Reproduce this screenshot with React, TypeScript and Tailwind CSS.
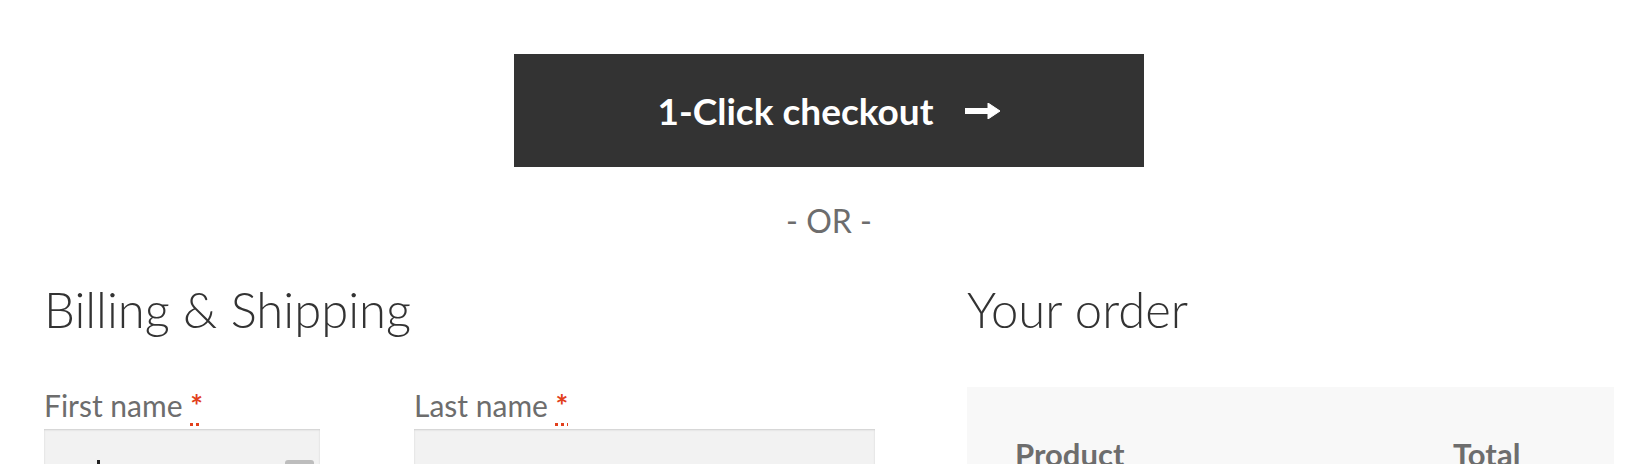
import React from "react";

function Arrow() {
  return (
    <svg width="35" height="16" viewBox="0 0 35 16" className="block">
      <rect x="0" y="5" width="25" height="6" fill="#ffffff" />
      <path d="M23 0 L35 8 L23 16 Z" fill="#ffffff" strokeLinejoin="round" stroke="#ffffff" strokeWidth="1" />
    </svg>
  );
}

function Req() {
  return (
    <span className="text-[#e2401c] font-bold underline decoration-dotted decoration-[#e2401c] underline-offset-[6px]">*</span>
  );
}

export default function App() {
  return (
    <div className="w-[1652px] h-[464px] overflow-hidden bg-white font-['Lato',sans-serif]">
      <div className="flex flex-col items-center pt-[54px]">
        <button className="w-[630px] h-[113px] bg-[#333333] text-white flex items-center justify-center gap-[32px] ml-[6px]">
          <span className="text-[37px] font-bold leading-none">1-Click checkout</span>
          <Arrow />
        </button>
        <div className="mt-[38px] text-[32px] leading-[32px] text-[#6d6d6d] ml-[6px]">- OR -</div>
      </div>
      <div className="flex pl-[44px] gap-[92px] mt-[42px]">
        <div className="w-[831px] shrink-0">
          <h2 className="text-[49px] leading-[60px] font-light text-[#333333]">Billing &amp; Shipping</h2>
          <div className="flex gap-[94px] mt-[46px]">
            <div className="w-[276px] shrink-0">
              <label className="block text-[30px] leading-[40px] text-[#6d6d6d]">
                First name <Req />
              </label>
              <div className="relative mt-[4px] h-[80px] bg-[#f2f2f2] shadow-[inset_0_1px_2px_rgba(0,0,0,0.15)]">
                <span className="absolute left-[53px] top-[31px] w-[3px] h-[12px] bg-[#222]" />
                <span className="absolute left-[241px] top-[31px] w-[29px] h-[20px] rounded-[3px] bg-[#bdbdbd]" />
              </div>
            </div>
            <div className="w-[461px] shrink-0">
              <label className="block text-[30px] leading-[40px] text-[#6d6d6d]">
                Last name <Req />
              </label>
              <div className="mt-[4px] h-[80px] bg-[#f2f2f2] shadow-[inset_0_1px_2px_rgba(0,0,0,0.15)]" />
            </div>
          </div>
        </div>
        <div className="w-[647px] shrink-0">
          <h2 className="text-[49px] leading-[60px] font-light text-[#333333]">Your order</h2>
          <div className="mt-[48px] bg-[#f8f8f8] pt-[47px] pl-[48px] h-[200px]">
            <div className="flex text-[31px] leading-[40px] font-bold text-[#6d6d6d]">
              <span className="w-[438px] shrink-0">Product</span>
              <span>Total</span>
            </div>
          </div>
        </div>
      </div>
    </div>
  );
}
